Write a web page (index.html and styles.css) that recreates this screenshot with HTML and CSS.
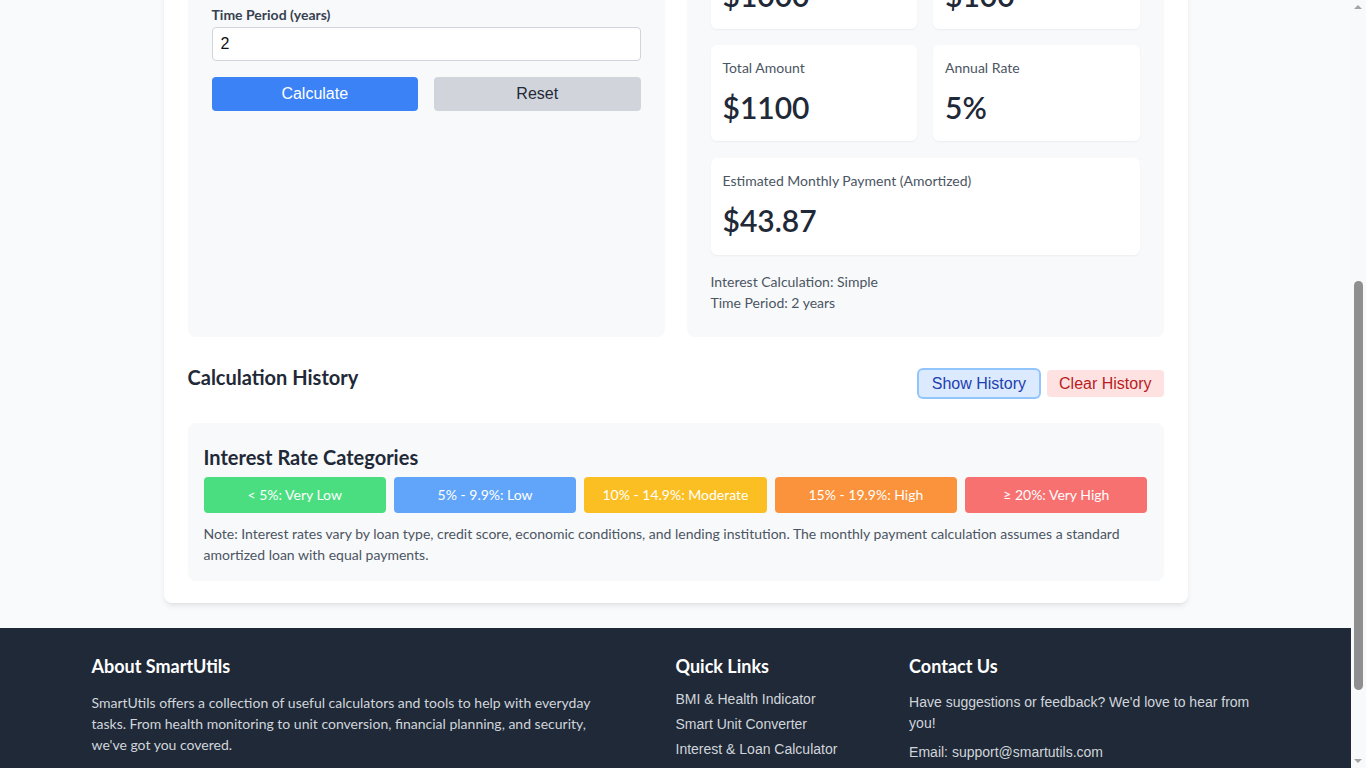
FILE: index.html
```html
<!DOCTYPE html>
<html lang="en">
<head>
<meta charset="utf-8">
<title>Interest &amp; Loan Calculator - SmartUtils</title>
<link rel="stylesheet" href="styles.css">
</head>
<body>
<main class="page">
  <section class="calc-card">
    <div class="calc-grid">
      <div class="panel form-panel">
        <h2 class="panel-title">Loan Details</h2>
        <div class="field">
          <label class="field-label">Annual Interest Rate (%)</label>
          <input class="field-input" type="text" value="5">
        </div>
        <div class="field">
          <label class="field-label">Time Period (years)</label>
          <input class="field-input" type="text" value="2">
        </div>
        <div class="btn-row">
          <button class="btn btn-primary">Calculate</button>
          <button class="btn btn-secondary">Reset</button>
        </div>
      </div>
      <div class="panel result-panel">
        <h2 class="panel-title">Results</h2>
        <div class="result-grid">
          <div class="result-card"><div class="result-label">Principal Amount</div><div class="result-value">$1000</div></div>
          <div class="result-card"><div class="result-label">Total Interest</div><div class="result-value">$100</div></div>
          <div class="result-card"><div class="result-label">Total Amount</div><div class="result-value">$1100</div></div>
          <div class="result-card"><div class="result-label">Annual Rate</div><div class="result-value">5%</div></div>
          <div class="result-card wide"><div class="result-label">Estimated Monthly Payment (Amortized)</div><div class="result-value">$43.87</div></div>
        </div>
        <div class="result-meta">
          <p>Interest Calculation: Simple</p>
          <p>Time Period: 2 years</p>
        </div>
      </div>
    </div>

    <div class="history-head">
      <h3 class="history-title">Calculation History</h3>
      <div class="history-actions">
        <button class="hbtn hbtn-show">Show History</button>
        <button class="hbtn hbtn-clear">Clear History</button>
      </div>
    </div>

    <div class="categories">
      <h3 class="cat-title">Interest Rate Categories</h3>
      <div class="cat-row">
        <div class="cat cat-green">&lt; 5%: Very Low</div>
        <div class="cat cat-blue">5% - 9.9%: Low</div>
        <div class="cat cat-yellow">10% - 14.9%: Moderate</div>
        <div class="cat cat-orange">15% - 19.9%: High</div>
        <div class="cat cat-red">&ge; 20%: Very High</div>
      </div>
      <p class="cat-note">Note: Interest rates vary by loan type, credit score, economic conditions, and lending institution. The monthly payment calculation assumes a standard amortized loan with equal payments.</p>
    </div>
  </section>
</main>

<footer class="footer">
  <div class="footer-inner">
    <div class="f-col f-about">
      <h4 class="f-title">About SmartUtils</h4>
      <p class="f-text">SmartUtils offers a collection of useful calculators and tools to help with everyday tasks. From health monitoring to unit conversion, financial planning, and security, we've got you covered.</p>
    </div>
    <div class="f-col f-links">
      <h4 class="f-title">Quick Links</h4>
      <ul class="f-list">
        <li><a href="#">BMI &amp; Health Indicator</a></li>
        <li><a href="#">Smart Unit Converter</a></li>
        <li><a href="#">Interest &amp; Loan Calculator</a></li>
      </ul>
    </div>
    <div class="f-col f-contact">
      <h4 class="f-title">Contact Us</h4>
      <p class="f-text f-arial">Have suggestions or feedback? We'd love to hear from you!</p>
      <p class="f-text f-arial f-email">Email: support@smartutils.com</p>
    </div>
  </div>
  <div class="f-bottom">&copy; 2024 SmartUtils. All rights reserved.</div>
</footer>

<div class="scrollbar" aria-hidden="true">
  <span class="sb-arrow sb-up"></span>
  <span class="sb-thumb"></span>
  <span class="sb-arrow sb-down"></span>
</div>
</body>
</html>
```

FILE: styles.css
```css
* { box-sizing: border-box; }
html, body { margin: 0; padding: 0; }
body {
  background: #f8fafc;
  font-family: Lato, "Noto Sans", sans-serif;
  color: #1f2937;
  margin-right: 15px;
}

.page {
  max-width: 1024px;
  margin: -159px auto 25px;
}

.calc-card {
  background: #fff;
  border-radius: 8px;
  box-shadow: 0 4px 6px -1px rgba(0,0,0,0.08), 0 2px 4px -2px rgba(0,0,0,0.06);
  padding: 24px 24px 22px;
}

.calc-grid {
  display: grid;
  grid-template-columns: 1fr 1fr;
  gap: 22px;
}

.panel {
  background: #f8f9fa;
  border-radius: 8px;
  padding: 24px;
}

.panel-title {
  font-size: 20px;
  line-height: 28px;
  font-weight: 700;
  margin: 0 0 16px;
}

.field { margin-bottom: 16px; }
.field-label {
  display: block;
  font-size: 14px;
  line-height: 20px;
  font-weight: 700;
  color: #374151;
  margin-bottom: 2px;
}
.field-input {
  display: block;
  width: 100%;
  height: 34px;
  padding: 6px 8px;
  border: 1px solid #d1d5db;
  border-radius: 4px;
  font: 16px "Liberation Sans", Arial, sans-serif;
  color: #111;
  background: #fff;
}

.btn-row {
  display: grid;
  grid-template-columns: 1fr 1fr;
  gap: 16px;
}
.btn {
  height: 34px;
  border: 0;
  border-radius: 4px;
  font: 16px "Liberation Sans", Arial, sans-serif;
}
.btn-primary { background: #3b82f6; color: #fff; }
.btn-secondary { background: #d1d5db; color: #1f2937; }

.result-grid {
  display: grid;
  grid-template-columns: 1fr 1fr;
  gap: 17px 16px;
}
.result-grid .result-card:nth-child(-n+2) { margin-bottom: -1px; }
.result-card {
  background: #fff;
  border-radius: 6px;
  padding: 13px 12px 16px;
  box-shadow: 0 1px 2px rgba(0,0,0,0.05);
}
.result-card.wide { grid-column: span 2; padding-bottom: 17px; }
.result-label {
  font-size: 14px;
  line-height: 20px;
  color: #4b5563;
  margin-bottom: 11px;
}
.result-value {
  font-size: 30px;
  line-height: 36px;
  font-weight: 600;
  color: #1f2937;
}
.result-meta {
  margin-top: 16px;
  font-size: 14px;
  line-height: 21px;
  color: #4b5563;
}
.result-meta p { margin: 0; }

.history-head {
  display: flex;
  justify-content: space-between;
  align-items: flex-start;
  margin: 26px 0 26px;
}
.history-title {
  font-size: 20px;
  line-height: 28px;
  font-weight: 700;
  margin: 0;
  color: #1f2937;
}
.history-actions {
  display: flex;
  gap: 8px;
  margin-top: 7px;
}
.hbtn {
  font: 16px/19px "Liberation Sans", Arial, sans-serif;
  padding: 4px 12px;
  border: 0;
  border-radius: 4px;
}
.hbtn-show {
  background: #dbeafe;
  color: #1e40af;
  padding: 4px 13px;
  box-shadow: 0 0 0 2px #93c5fd;
}
.hbtn-clear { background: #fee2e2; color: #b91c1c; }

.categories {
  background: #f8f9fa;
  border-radius: 8px;
  padding: 20px 16px 16px;
}
.cat-title {
  font-size: 20px;
  line-height: 28px;
  font-weight: 700;
  margin: 0 0 6px;
  color: #1f2937;
}
.cat-row {
  display: grid;
  grid-template-columns: repeat(5, 1fr);
  gap: 8px;
}
.cat {
  color: #fff;
  text-align: center;
  font-size: 14px;
  line-height: 20px;
  padding: 8px;
  border-radius: 4px;
}
.cat-green { background: #4ade80; }
.cat-blue { background: #60a5fa; }
.cat-yellow { background: #fbbf24; }
.cat-orange { background: #fb923c; }
.cat-red { background: #f87171; }
.cat-note {
  margin: 10px 0 0;
  font-size: 14px;
  line-height: 21px;
  color: #4b5563;
}

.footer {
  background: #1f2937;
  color: #d1d5db;
  padding: 24px 0 32px;
}
.footer-inner {
  max-width: 1200px;
  margin: 0 auto;
  padding: 0 16px;
  display: grid;
  grid-template-columns: 2fr 0.8fr 1.2fr;
}
.f-title {
  font-size: 18px;
  line-height: 28px;
  font-weight: 700;
  color: #fff;
  margin: 0 0 12px;
}
.f-text {
  font-size: 14px;
  line-height: 21px;
  margin: 0;
}
.f-about .f-text { max-width: 510px; }
.f-arial { font-family: "Liberation Sans", Arial, sans-serif; }
.f-email { margin-top: 8px; }
.f-list {
  list-style: none;
  margin: -3px 0 0;
  padding: 0;
  display: flex;
  flex-direction: column;
  gap: 5px;
  font: 14px/20px "Liberation Sans", Arial, sans-serif;
}
.f-list li { height: 20px; }
.f-list a {
  color: #d1d5db;
  text-decoration: none;
}
.f-bottom {
  max-width: 1200px;
  margin: 40px auto 0;
  padding: 16px;
  border-top: 1px solid #374151;
  text-align: center;
  font-size: 14px;
  color: #9ca3af;
}

/* window scrollbar, drawn over the right edge */
.scrollbar {
  position: fixed;
  top: 0;
  right: 0;
  width: 15px;
  height: 100vh;
  background: #f8f9fb;
}
.sb-thumb {
  position: absolute;
  left: 3px;
  top: 281px;
  width: 9px;
  height: 409px;
  border-radius: 5px;
  background: #8f8f8f;
}
.sb-arrow {
  position: absolute;
  left: 3px;
  width: 0;
  height: 0;
  border-left: 4.5px solid transparent;
  border-right: 4.5px solid transparent;
}
.sb-up { top: 5px; border-bottom: 4px solid #a3a3a3; }
.sb-down { bottom: 5px; border-top: 4px solid #a3a3a3; }
```
